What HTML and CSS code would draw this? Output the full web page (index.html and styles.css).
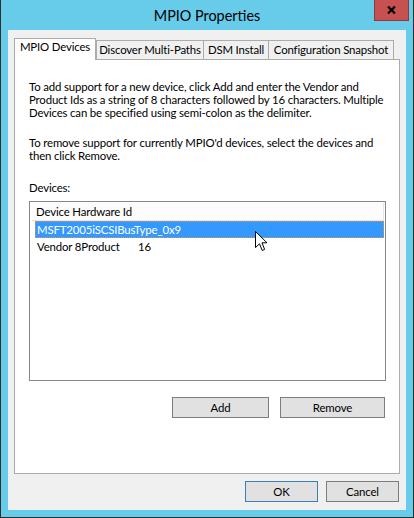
FILE: index.html
```html
<!DOCTYPE html>
<html lang="en">
<head>
    <meta charset="UTF-8">
    <title>MPIO Properties</title>
    <link rel="stylesheet" href="styles.css">
</head>
<body>
    <div class="window">
        <div class="titlebar">
            <span class="title">MPIO Properties</span>
            <div class="close">
                <svg width="9" height="8" viewBox="0 0 9 8">
                    <path d="M1 0.5 L8 7.5 M8 0.5 L1 7.5" stroke="#000" stroke-width="2.2" fill="none"/>
                </svg>
            </div>
        </div>

        <div class="client">
            <div class="tabs">
                <div class="tab active">MPIO Devices</div>
                <div class="tab tab-discover">Discover Multi-Paths</div>
                <div class="tab tab-dsm">DSM Install</div>
                <div class="tab tab-snapshot">Configuration Snapshot</div>
            </div>

            <div class="panel">
                <p class="intro">To add support for a new device, click Add and enter the Vendor and<br>Product Ids as a string of 8 characters followed by 16 characters. Multiple<br>Devices can be specified using semi-colon as the delimiter.</p>
                <p class="remove-note">To remove support for currently MPIO'd devices, select the devices and<br>then click Remove.</p>
                <div class="devices-label">Devices:</div>

                <div class="listbox">
                    <div class="list-header">Device Hardware Id</div>
                    <div class="row selected">MSFT2005iSCSIBusType_0x9</div>
                    <div class="row"><span class="vendor">Vendor 8Product</span>16</div>
                    <!-- mouse pointer over the selected row -->
                    <svg class="pointer" width="13" height="21" viewBox="0 0 13 21">
                        <path d="M0.5 0.5 L0.5 16.5 L4.5 12.8 L7.2 19.5 L9.6 18.4 L7 11.8 L12 11.8 Z" fill="#fff" stroke="#000" stroke-width="1"/>
                    </svg>
                </div>

                <div class="actions">
                    <button class="btn btn-add">Add</button>
                    <button class="btn btn-remove">Remove</button>
                </div>
            </div>

            <div class="footer">
                <button class="btn btn-dialog default">OK</button>
                <button class="btn btn-dialog">Cancel</button>
            </div>
        </div>
    </div>
</body>
</html>
```

FILE: styles.css
```css
body {
    margin: 0;
    font-family: Lato, "Liberation Sans", sans-serif;
    font-size: 11.4px;
    letter-spacing: -0.15px;
    color: #000;
}

.window {
    width: 414px;
    height: 518px;
    box-sizing: border-box;
    background-color: #67cbea;
    border: 1px solid #2e2e2e;
    border-top: none;
    padding: 0 7px 7px 7px;
}

.titlebar {
    position: relative;
    height: 30px;
    display: flex;
    justify-content: center;
    align-items: center;
}

.title {
    font-size: 14.4px;
    letter-spacing: 0;
    padding-top: 1px;
}

.close {
    position: absolute;
    top: 0;
    right: -3px;
    width: 35px;
    height: 21px;
    box-sizing: border-box;
    background-color: #c75050;
    border: 1px solid #8e3a3a;
    border-top: none;
    display: flex;
    justify-content: center;
    align-items: center;
}

.client {
    height: 480px;
    box-sizing: border-box;
    background-color: #f0f0f0;
    padding: 8px 6px 0 6px;
}

/* tab strip */
.tabs {
    display: flex;
    align-items: flex-end;
    height: 21px;
}

.tab {
    box-sizing: border-box;
    height: 19px;
    line-height: 16px;
    padding-top: 1px;
    text-align: center;
    white-space: nowrap;
    background-color: #f0f0f0;
    border: 1px solid #acacac;
    border-bottom: none;
}

.tab.active {
    position: relative;
    z-index: 1;
    width: 82px;
    height: 22px;
    margin-bottom: -1px;
    padding-top: 0;
    background-color: #fff;
}

.tab-discover {
    width: 108px;
}

.tab-dsm {
    width: 66px;
    margin-left: -1px;
}

.tab-snapshot {
    width: 126px;
    margin-left: -1px;
}

.panel {
    height: 415px;
    box-sizing: border-box;
    background-color: #fff;
    border: 1px solid #acacac;
    padding: 20px 13px 0 14px;
}

.panel p {
    margin: 0;
    line-height: 13px;
    white-space: nowrap;
}

.remove-note {
    margin-top: 17px !important;
}

.devices-label {
    margin-top: 19px;
    line-height: 13px;
}

/* device list */
.listbox {
    position: relative;
    height: 180px;
    margin-top: 7px;
    box-sizing: border-box;
    border: 1px solid #828790;
}

.list-header {
    height: 18px;
    box-sizing: border-box;
    margin: 1px 1px 0 2px;
    padding: 1px 0 0 4px;
    line-height: 16px;
    background-color: #fcfcfc;
    border-right: 1px solid #e5e5e5;
    border-bottom: 1px solid #e5e5e5;
}

.row {
    height: 17px;
    box-sizing: border-box;
    margin: 0 1px 0 5px;
    padding-left: 1px;
    line-height: 15px;
    border: 1px solid transparent;
}

.row.selected {
    background-color: #3399ff;
    color: #fff;
    border: 1px dotted #e0953c;
}

.vendor {
    display: inline-block;
    width: 101px;
}

.pointer {
    position: absolute;
    left: 225px;
    top: 29px;
}

/* buttons */
.btn {
    font-family: inherit;
    font-size: 11.4px;
    letter-spacing: inherit;
    height: 21px;
    padding: 0;
    margin: 0;
    box-sizing: border-box;
    background-color: #e1e1e1;
    border: 1px solid #7d7d7d;
    color: #000;
}

.actions {
    display: flex;
    justify-content: flex-end;
    gap: 11px;
    margin-top: 16px;
    padding-right: 1px;
}

.btn-add {
    width: 97px;
}

.btn-remove {
    width: 105px;
}

.footer {
    display: flex;
    justify-content: flex-end;
    gap: 8px;
    margin-top: 7px;
    padding-right: 1px;
}

.btn-dialog {
    width: 73px;
}

.btn-dialog.default {
    border-color: #3c7fb1;
}
```
